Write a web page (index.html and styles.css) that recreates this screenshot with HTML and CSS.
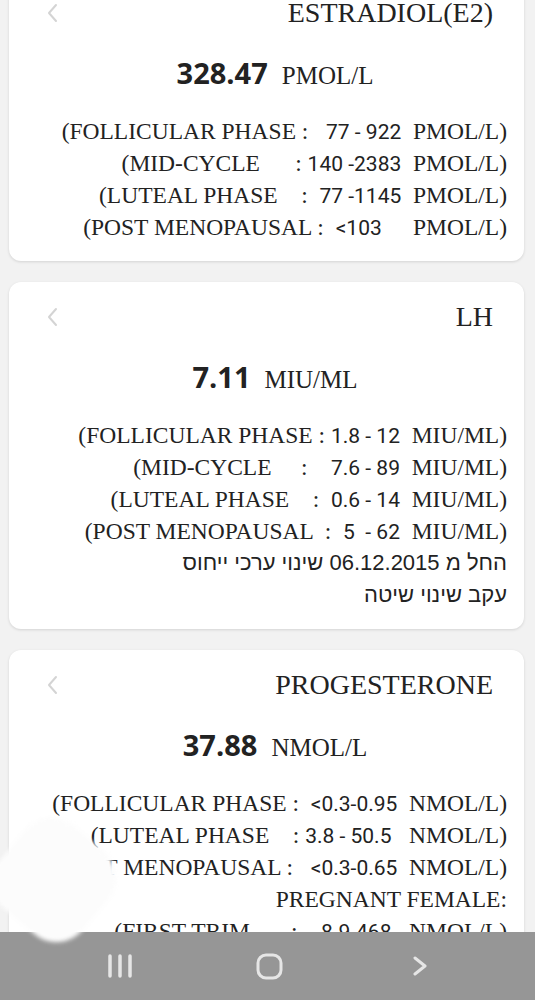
FILE: index.html
```html
<!DOCTYPE html>
<html lang="en">
<head>
    <meta charset="UTF-8">
    <meta name="viewport" content="width=device-width, initial-scale=1.0">
    <title>Lab Results</title>
    <link rel="stylesheet" href="styles.css">
</head>
<body>
    <div class="page">
        <div class="card">
            <div class="card-head">
                <svg class="back" width="11" height="20" viewBox="0 0 11 20"><polyline points="9,2 2,10 9,18" fill="none" stroke="#d4d4d4" stroke-width="2" stroke-linecap="round" stroke-linejoin="round"/></svg>
                <h2>ESTRADIOL(E2)</h2>
            </div>
            <div class="result"><span class="value">328.47</span><span class="unit">PMOL/L</span></div>
            <div class="ranges">
                <div class="line">(FOLLICULAR PHASE :   <span class="num">77 - 922</span>  PMOL/L)</div>
                <div class="line">(MID-CYCLE      : <span class="num">140 -2383</span>  PMOL/L)</div>
                <div class="line">(LUTEAL PHASE    :  <span class="num">77 -1145</span>  PMOL/L)</div>
                <div class="line">(POST MENOPAUSAL :  <span class="num">&lt;103      </span>PMOL/L)</div>
            </div>
        </div>

        <div class="card">
            <div class="card-head">
                <svg class="back" width="11" height="20" viewBox="0 0 11 20"><polyline points="9,2 2,10 9,18" fill="none" stroke="#d4d4d4" stroke-width="2" stroke-linecap="round" stroke-linejoin="round"/></svg>
                <h2>LH</h2>
            </div>
            <div class="result"><span class="value">7.11</span><span class="unit">MIU/ML</span></div>
            <div class="ranges">
                <div class="line">(FOLLICULAR PHASE : <span class="num">1.8 - 12</span>  MIU/ML)</div>
                <div class="line">(MID-CYCLE     :    <span class="num">7.6 - 89</span>  MIU/ML)</div>
                <div class="line">(LUTEAL PHASE    :  <span class="num">0.6 - 14</span>  MIU/ML)</div>
                <div class="line">(POST MENOPAUSAL  :  <span class="num">5  - 62</span>  MIU/ML)</div>
                <div class="line heb" dir="rtl">החל מ 06.12.2015 שינוי ערכי ייחוס</div>
                <div class="line heb" dir="rtl">עקב שינוי שיטה</div>
            </div>
        </div>

        <div class="card">
            <div class="card-head">
                <svg class="back" width="11" height="20" viewBox="0 0 11 20"><polyline points="9,2 2,10 9,18" fill="none" stroke="#d4d4d4" stroke-width="2" stroke-linecap="round" stroke-linejoin="round"/></svg>
                <h2>PROGESTERONE</h2>
            </div>
            <div class="result"><span class="value">37.88</span><span class="unit">NMOL/L</span></div>
            <div class="ranges">
                <div class="line">(FOLLICULAR PHASE :  <span class="num">&lt;0.3-0.95</span>  NMOL/L)</div>
                <div class="line">(LUTEAL PHASE    : <span class="num">3.8 - 50.5</span>   NMOL/L)</div>
                <div class="line">(POST MENOPAUSAL :   <span class="num">&lt;0.3-0.65</span>  NMOL/L)</div>
                <div class="line">PREGNANT FEMALE:</div>
                <div class="line">(FIRST TRIM       :    <span class="num">8.9-468</span>   NMOL/L)</div>
                <div class="line">(SECOND TRIM    :   <span class="num">71.5-303</span>   NMOL/L)</div>
                <div class="line">(THIRD TRIM      :   <span class="num">88.7-771</span>   NMOL/L)</div>
            </div>
        </div>
    </div>

    <div class="smudge"></div>

    <div class="navbar">
        <div class="nav-btn">
            <svg width="26" height="26" viewBox="0 0 26 26">
                <g stroke="#e6e6e6" stroke-width="3.5" stroke-linecap="round">
                    <line x1="3" y1="3" x2="3" y2="23"/>
                    <line x1="13" y1="3" x2="13" y2="23"/>
                    <line x1="23" y1="3" x2="23" y2="23"/>
                </g>
            </svg>
        </div>
        <div class="nav-btn">
            <svg width="27" height="27" viewBox="0 0 27 27"><rect x="2" y="2" width="23" height="23" rx="8" fill="none" stroke="#e6e6e6" stroke-width="3"/></svg>
        </div>
        <div class="nav-btn">
            <svg width="16" height="20" viewBox="0 0 16 20"><polyline points="3,2 13,10 3,18" fill="none" stroke="#e6e6e6" stroke-width="3" stroke-linecap="round" stroke-linejoin="round"/></svg>
        </div>
    </div>
</body>
</html>
```

FILE: styles.css
```css
body {
    margin: 0;
    background-color: #f2f2f2;
    font-family: 'Liberation Serif', serif;
    color: #222;
    position: relative;
}
.page {
    margin-top: -22px;
    padding: 0 11px 80px 9px;
}
.card {
    background-color: white;
    border-radius: 12px;
    box-shadow: 0 1px 3px rgba(0,0,0,0.13);
    padding: 17px 17px 18px 34px;
    margin-bottom: 21px;
}
.card-head {
    display: flex;
    align-items: center;
    justify-content: space-between;
    height: 36px;
}
.back {
    margin-left: 4px;
}
.card-head h2 {
    margin: 0;
    padding-right: 14px;
    font-weight: normal;
    font-size: 28px;
    line-height: 36px;
}
.result {
    margin-top: 27px;
    text-align: center;
    height: 40px;
    line-height: 40px;
}
.value {
    font-family: 'Open Sans', sans-serif;
    font-weight: 700;
    font-size: 29px;
    line-height: 1;
}
.unit {
    margin-left: 14px;
    font-size: 25px;
    line-height: 1;
}
.ranges {
    margin-top: 17px;
}
.line {
    text-align: right;
    white-space: pre;
    font-size: 23.5px;
    height: 32px;
    line-height: 32px;
}
.num {
    font-family: Roboto, sans-serif;
    font-size: 21px;
    line-height: 1;
}
.heb {
    font-family: 'Liberation Sans', 'DejaVu Sans', sans-serif;
    font-size: 22px;
}
.smudge {
    position: absolute;
    left: 0;
    top: 826px;
    width: 108px;
    height: 108px;
    background-color: #fcfcfc;
    border-radius: 34px;
    transform: rotate(40deg);
    filter: blur(2px);
    z-index: 5;
}
.navbar {
    position: fixed;
    left: 0;
    right: 0;
    bottom: 0;
    height: 68px;
    background-color: #969696;
    display: grid;
    grid-template-columns: repeat(3, 150px);
    justify-content: center;
    align-items: center;
    padding-left: 4px;
    z-index: 4;
}
.nav-btn {
    display: flex;
    justify-content: center;
    align-items: center;
}
```
